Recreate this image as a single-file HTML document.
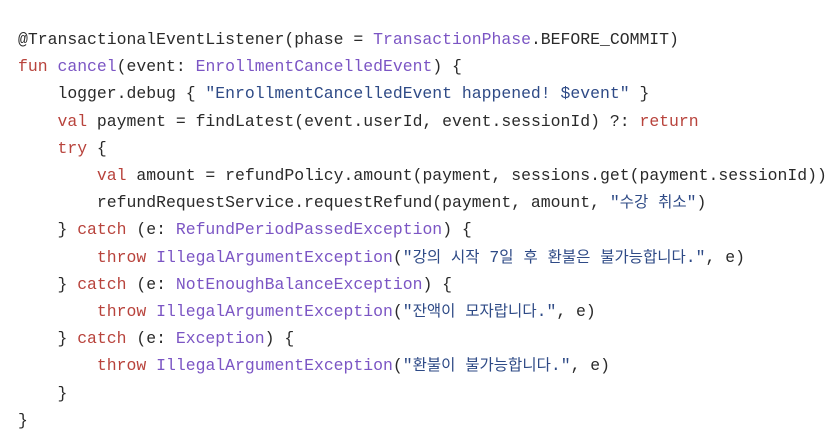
<!DOCTYPE html>
<html><head><meta charset="utf-8"><style>
html,body{margin:0;padding:0;background:#fff;width:838px;height:447px;overflow:hidden}
pre{position:absolute;left:18px;top:26px;margin:0;font-family:"Liberation Mono",monospace;font-size:16.45px;line-height:27.2px;color:#2a2a2a}
.k{color:#b8433c}.f{color:#7b55c4}.s{color:#2e4a86}
.h{font-family:"Noto Sans CJK KR",sans-serif;font-size:15.5px;letter-spacing:0;line-height:0}
</style></head><body><pre>@TransactionalEventListener(phase = <span class="f">TransactionPhase</span>.BEFORE_COMMIT)
<span class="k">fun</span> <span class="f">cancel</span>(event: <span class="f">EnrollmentCancelledEvent</span>) {
    logger.debug { <span class="s">"EnrollmentCancelledEvent happened! $event"</span> }
    <span class="k">val</span> payment = findLatest(event.userId, event.sessionId) ?: <span class="k">return</span>
    <span class="k">try</span> {
        <span class="k">val</span> amount = refundPolicy.amount(payment, sessions.get(payment.sessionId))
        refundRequestService.requestRefund(payment, amount, <span class="s">"<span class="h">수강</span> <span class="h">취소</span>"</span>)
    } <span class="k">catch</span> (e: <span class="f">RefundPeriodPassedException</span>) {
        <span class="k">throw</span> <span class="f">IllegalArgumentException</span>(<span class="s">"<span class="h">강의</span> <span class="h">시작</span> 7<span class="h">일</span> <span class="h">후</span> <span class="h">환불은</span> <span class="h">불가능합니다</span>."</span>, e)
    } <span class="k">catch</span> (e: <span class="f">NotEnoughBalanceException</span>) {
        <span class="k">throw</span> <span class="f">IllegalArgumentException</span>(<span class="s">"<span class="h">잔액이</span> <span class="h">모자랍니다</span>."</span>, e)
    } <span class="k">catch</span> (e: <span class="f">Exception</span>) {
        <span class="k">throw</span> <span class="f">IllegalArgumentException</span>(<span class="s">"<span class="h">환불이</span> <span class="h">불가능합니다</span>."</span>, e)
    }
}</pre></body></html>
